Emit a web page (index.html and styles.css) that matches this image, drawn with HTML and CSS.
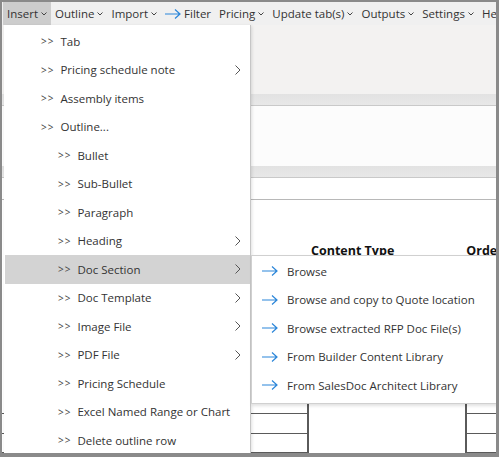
FILE: index.html
```html
<!DOCTYPE html>
<html lang="en">
<head>
  <meta charset="UTF-8">
  <title>Insert menu</title>
  <link rel="stylesheet" href="styles.css">
</head>
<body>

<div class="window">
  <div class="menubar">
    <span class="menu-item active">Insert <svg class="caret" viewBox="0 0 6 4"><polyline points="0.5,0.5 3,3 5.5,0.5"/></svg></span>
    <span class="menu-item">Outline <svg class="caret" viewBox="0 0 6 4"><polyline points="0.5,0.5 3,3 5.5,0.5"/></svg></span>
    <span class="menu-item">Import <svg class="caret" viewBox="0 0 6 4"><polyline points="0.5,0.5 3,3 5.5,0.5"/></svg></span>
    <span class="menu-item"><svg class="arrow" viewBox="0 0 16 10"><path d="M0 5H15M10 0.5L15 5L10 9.5"/></svg>Filter</span>
    <span class="menu-item">Pricing <svg class="caret" viewBox="0 0 6 4"><polyline points="0.5,0.5 3,3 5.5,0.5"/></svg></span>
    <span class="menu-item">Update tab(s) <svg class="caret" viewBox="0 0 6 4"><polyline points="0.5,0.5 3,3 5.5,0.5"/></svg></span>
    <span class="menu-item">Outputs <svg class="caret" viewBox="0 0 6 4"><polyline points="0.5,0.5 3,3 5.5,0.5"/></svg></span>
    <span class="menu-item">Settings <svg class="caret" viewBox="0 0 6 4"><polyline points="0.5,0.5 3,3 5.5,0.5"/></svg></span>
    <span class="menu-item">Help</span>
  </div>

  <div class="ribbon"></div>
  <div class="band"></div>
  <div class="panel"></div>
  <div class="band"></div>
  <div class="search-row"></div>

  <div class="grid-area">
    <div class="grid-head">
      <span class="col-type">Content Type</span>
      <span class="col-order">Order</span>
    </div>
    <div class="grid-rows">
      <div class="cell c1"></div><div class="cell c2"></div><div class="cell c3"></div>
      <div class="cell c1"></div><div class="cell c2"></div><div class="cell c3"></div>
      <div class="cell c1"></div><div class="cell c2"></div><div class="cell c3"></div>
    </div>
  </div>

  <!-- Insert dropdown -->
  <div class="dropdown">
    <div class="dd-item"><span class="gt">&gt;&gt;</span>Tab</div>
    <div class="dd-item"><span class="gt">&gt;&gt;</span>Pricing schedule note<svg class="chev" viewBox="0 0 6 10"><polyline points="0.5,0.5 5,5 0.5,9.5"/></svg></div>
    <div class="dd-item"><span class="gt">&gt;&gt;</span>Assembly items</div>
    <div class="dd-item"><span class="gt">&gt;&gt;</span>Outline...</div>
    <div class="dd-item sub"><span class="gt">&gt;&gt;</span>Bullet</div>
    <div class="dd-item sub"><span class="gt">&gt;&gt;</span>Sub-Bullet</div>
    <div class="dd-item sub"><span class="gt">&gt;&gt;</span>Paragraph</div>
    <div class="dd-item sub"><span class="gt">&gt;&gt;</span>Heading<svg class="chev" viewBox="0 0 6 10"><polyline points="0.5,0.5 5,5 0.5,9.5"/></svg></div>
    <div class="dd-item sub hot"><span class="gt">&gt;&gt;</span>Doc Section<svg class="chev" viewBox="0 0 6 10"><polyline points="0.5,0.5 5,5 0.5,9.5"/></svg></div>
    <div class="dd-item sub"><span class="gt">&gt;&gt;</span>Doc Template<svg class="chev" viewBox="0 0 6 10"><polyline points="0.5,0.5 5,5 0.5,9.5"/></svg></div>
    <div class="dd-item sub"><span class="gt">&gt;&gt;</span>Image File<svg class="chev" viewBox="0 0 6 10"><polyline points="0.5,0.5 5,5 0.5,9.5"/></svg></div>
    <div class="dd-item sub"><span class="gt">&gt;&gt;</span>PDF File<svg class="chev" viewBox="0 0 6 10"><polyline points="0.5,0.5 5,5 0.5,9.5"/></svg></div>
    <div class="dd-item sub"><span class="gt">&gt;&gt;</span>Pricing Schedule</div>
    <div class="dd-item sub"><span class="gt">&gt;&gt;</span>Excel Named Range or Chart</div>
    <div class="dd-item sub"><span class="gt">&gt;&gt;</span>Delete outline row</div>
  </div>

  <!-- Doc Section submenu -->
  <div class="submenu">
    <div class="sm-item"><svg class="arrow" viewBox="0 0 16 10"><path d="M0 5H15M10 0.5L15 5L10 9.5"/></svg>Browse</div>
    <div class="sm-item"><svg class="arrow" viewBox="0 0 16 10"><path d="M0 5H15M10 0.5L15 5L10 9.5"/></svg>Browse and copy to Quote location</div>
    <div class="sm-item"><svg class="arrow" viewBox="0 0 16 10"><path d="M0 5H15M10 0.5L15 5L10 9.5"/></svg>Browse extracted RFP Doc File(s)</div>
    <div class="sm-item"><svg class="arrow" viewBox="0 0 16 10"><path d="M0 5H15M10 0.5L15 5L10 9.5"/></svg>From Builder Content Library</div>
    <div class="sm-item"><svg class="arrow" viewBox="0 0 16 10"><path d="M0 5H15M10 0.5L15 5L10 9.5"/></svg>From SalesDoc Architect Library</div>
  </div>
</div>

</body>
</html>
```

FILE: styles.css
```css
body {
  margin: 0;
  font-family: "Open Sans", "Noto Sans", sans-serif;
  font-size: 11.5px;
  color: #333;
  background: #fff;
}
.window {
  position: relative;
  width: 494px;
  height: 451px;
  border: 2px solid #8a8a8a;
  border-right-width: 3px;
  border-bottom-width: 4px;
  overflow: hidden;
  background: #fff;
  display: flex;
  flex-direction: column;
}
.menubar {
  height: 23px;
  flex: none;
  display: flex;
  align-items: stretch;
  background: #f0f0f0;
  padding-left: 1px;
  white-space: nowrap;
}
.menu-item {
  display: flex;
  align-items: center;
  gap: 3px;
  padding: 0 4px 0 4px;
}
.menu-item.active {
  background: #cdcdcd;
}
.caret {
  width: 6px;
  height: 4px;
  fill: none;
  stroke: #444;
  stroke-width: 1;
}
.arrow {
  width: 16px;
  height: 10px;
  fill: none;
  stroke: #2b86d9;
  stroke-width: 1.2;
}
.ribbon {
  height: 69px;
  flex: none;
  background: #f3f2f1;
}
.band {
  height: 11px;
  flex: none;
  background: linear-gradient(#e2e2e2, #e8e8e8);
  border-bottom: 1px solid #c9c9c9;
}
.panel {
  height: 60px;
  flex: none;
  background: #fcfcfc;
}
.search-row {
  height: 21px;
  flex: none;
  background: #fff;
  border-bottom: 1px solid #b8b8b8;
}
.grid-area {
  flex: 1;
  display: flex;
  flex-direction: column;
}
.grid-head {
  height: 59px;
  display: flex;
  align-items: flex-end;
  font-weight: bold;
  font-size: 12.5px;
  color: #111;
  white-space: nowrap;
}
.col-type {
  margin-left: 309px;
}
.col-order {
  margin-left: 72px;
}
.grid-rows {
  margin-top: auto;
  display: grid;
  grid-template-columns: 305px 160px 1fr;
  grid-template-rows: 11px 20px 19px;
}
.cell.c1,
.cell.c3 {
  border-bottom: 1px solid #5a5a5a;
}
.cell.c2 {
  border-left: 2px solid #5a5a5a;
  border-right: 2px solid #5a5a5a;
}

.dropdown {
  position: absolute;
  left: 2px;
  top: 23px;
  width: 246px;
  height: 428px;
  padding-top: 2px;
  background: #fff;
  border-right: 1px solid #c6c6c6;
  box-shadow: 1px 1px 3px rgba(0,0,0,0.12);
}
.dd-item {
  height: 28.5px;
  display: flex;
  align-items: center;
  padding-left: 37px;
  padding-right: 9px;
  white-space: nowrap;
}
.dd-item.sub {
  padding-left: 54px;
}
.dd-item.hot {
  background: #d3d3d3;
  margin-left: 1px;
  padding-left: 53px;
}
.gt {
  font-size: 10px;
  letter-spacing: 1px;
  margin-right: 6px;
  color: #444;
}
.chev {
  margin-left: auto;
  width: 6px;
  height: 10px;
  fill: none;
  stroke: #555;
  stroke-width: 1;
}

.submenu {
  position: absolute;
  left: 249px;
  top: 253px;
  width: 250px;
  padding: 1px 0 3px;
  background: #fff;
  border: 1px solid #d0d0d0;
  box-shadow: 1px 2px 3px rgba(0,0,0,0.12);
}
.sm-item {
  height: 28.5px;
  display: flex;
  align-items: center;
  gap: 9px;
  padding-left: 10px;
  white-space: nowrap;
}
```
